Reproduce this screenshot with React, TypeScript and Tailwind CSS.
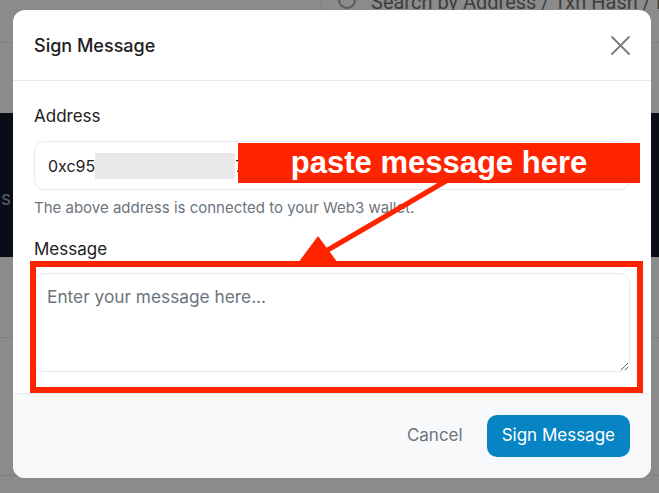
import { useState } from "react";

export default function App() {
  const [message, setMessage] = useState("");

  return (
    <div
      className="relative h-[493px] w-[659px] overflow-hidden bg-[#8b8b8b]"
      style={{ fontFamily: "Inter, Roboto, 'Liberation Sans', sans-serif" }}
    >
      {/* page behind the overlay */}
      <div className="flex h-full flex-col">
        <div className="flex h-[43px] border-b border-[#7f7f7f]">
          <div className="w-[322px] shrink-0 border-r border-[#7f7f7f]" />
          <div
            className="-mt-[13px] flex items-start gap-[15px] pl-[16px] text-[20px] text-[#3d3d3d] whitespace-nowrap"
            style={{ fontFamily: "Roboto, sans-serif" }}
          >
            <span className="mt-[4px] inline-block h-[18px] w-[18px] shrink-0 rounded-full border-2 border-[#5a5a5a]" />
            <span>Search by Address / Txn Hash / Block / Token</span>
          </div>
        </div>
        <div className="mt-[70px] flex h-[144px] items-start bg-[#080d16] pt-[72px] text-[19px] text-[#555c68]">
          <span className="-ml-[9px]">ss</span>
        </div>
        <div className="mt-[80px] h-px bg-[#7f7f7f]" />
        <div className="mt-[137px] h-px bg-[#7f7f7f]" />
      </div>

      {/* modal */}
      <div className="absolute left-[13px] top-[10px] flex h-[468px] w-[638px] flex-col overflow-hidden rounded-[12px] bg-white">
        <div className="flex h-[71px] shrink-0 items-center justify-between border-b border-[#e7eaf3] pl-[21px] pr-[21px]">
          <h2 className="text-[18px] font-medium text-[#1e2022]">Sign Message</h2>
          <button className="flex h-[20px] w-[20px] items-center justify-center">
            <svg width="19" height="19" viewBox="0 0 19 19" fill="none" stroke="#7b7b7b" strokeWidth="1.8" strokeLinecap="round">
              <path d="M1 1L18 18M18 1L1 18" />
            </svg>
          </button>
        </div>

        <div className="flex flex-1 flex-col px-[21px] pt-[24px]">
          <label className="text-[17px] leading-[22px] text-[#1e2022]">Address</label>
          <div className="mt-[14px] flex h-[49px] items-center rounded-[10px] border border-[#e7eaf3] pl-[13px] text-[16px] text-[#1e2022]">
            <span>0xc95</span>
            <span className="h-[26px] w-[140px] bg-[#e9e9e9]" />
            <span>7a4f1b2e</span>
          </div>
          <p className="mt-[8px] text-[15px] leading-[20px] text-[#6c757d]">
            The above address is connected to your Web3 wallet.
          </p>
          <label className="mt-[20px] text-[17px] leading-[22px] text-[#1e2022]">Message</label>
          <textarea
            value={message}
            onChange={(e) => setMessage(e.target.value)}
            placeholder="Enter your message here..."
            className="mt-[13px] h-[99px] rounded-[10px] border border-[#e7eaf3] px-[12px] py-[10px] text-[17.3px] text-[#1e2022] placeholder:text-[#6c757d] outline-none"
          />
        </div>

        <div className="flex h-[85px] shrink-0 items-center justify-end gap-[24px] border-t border-[#e7eaf3] bg-[#f8f9fa] pr-[21px]">
          <button className="text-[17px] text-[#6c757d]">Cancel</button>
          <button className="h-[42px] rounded-[10px] bg-[#0784c3] px-[15px] text-[17px] text-white">
            Sign Message
          </button>
        </div>
      </div>

      {/* annotation */}
      <div
        className="absolute left-[238px] top-[143px] flex h-[40px] w-[402px] items-center justify-center bg-[#ff2400] text-[31px] font-bold text-white"
        style={{ fontFamily: "'Liberation Sans', Arial, sans-serif" }}
      >
        paste message here
      </div>
      <div className="absolute left-[30px] top-[261px] h-[132px] w-[613px] border-[6px] border-[#ff2400]" />
      <svg className="absolute left-0 top-0" width="659" height="493" viewBox="0 0 659 493">
        <path d="M446 181L326 251" stroke="#ff2400" strokeWidth="5" />
        <polygon points="318,236 298,263 338,263" fill="#ff2400" />
      </svg>
    </div>
  );
}
